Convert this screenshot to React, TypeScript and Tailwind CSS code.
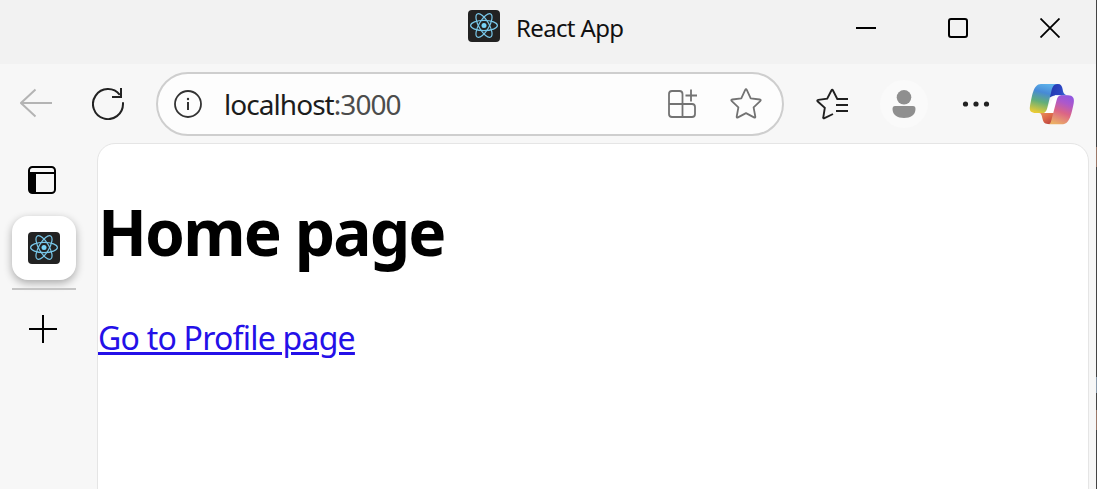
import React from "react";

function ReactIcon() {
  return (
    <svg className="block h-8 w-8 shrink-0" viewBox="0 0 32 32" fill="none">
      <rect width="32" height="32" rx="4" fill="#222" />
      <circle cx="16" cy="15.5" r="2.5" fill="#79d4f8" />
      <g stroke="#79c8ea" strokeWidth="1.2">
        <ellipse cx="16" cy="15.5" rx="13.4" ry="5.1" />
        <ellipse cx="16" cy="15.5" rx="13.4" ry="5.1" transform="rotate(60 16 15.5)" />
        <ellipse cx="16" cy="15.5" rx="13.4" ry="5.1" transform="rotate(120 16 15.5)" />
      </g>
    </svg>
  );
}

function TitleBar() {
  return (
    <header className="flex h-16 bg-[#f2f2f2] pl-[468px]">
      <div className="flex w-[352px] gap-4 pt-[10px]">
        <ReactIcon />
        <span className="text-2xl leading-[35px] tracking-[-0.65px] whitespace-nowrap text-[#111]">React App</span>
      </div>
      <div className="flex h-14 items-center">
        <button className="flex h-14 w-[92px] items-center justify-center" aria-label="Minimize">
          <svg className="h-5 w-5" viewBox="0 0 20 20"><path d="M0 10H20" stroke="#000" strokeWidth="2" /></svg>
        </button>
        <button className="flex h-14 w-[92px] items-center justify-center" aria-label="Maximize">
          <svg className="h-5 w-5" viewBox="0 0 20 20"><rect x="1" y="1" width="18" height="18" rx="2" fill="none" stroke="#000" strokeWidth="2" /></svg>
        </button>
        <button className="flex h-14 w-[92px] items-center justify-center" aria-label="Close">
          <svg className="h-5 w-5" viewBox="0 0 20 20"><path d="M.5.5l19 19M19.5.5l-19 19" stroke="#000" strokeWidth="1.8" /></svg>
        </button>
      </div>
    </header>
  );
}

function CopilotLogo() {
  return (
    <svg className="block h-11 w-12" viewBox="0 0 48 44">
      <defs>
        <linearGradient id="cpLeft" x1=".6" y1="0" x2=".35" y2="1">
          <stop offset="0" stopColor="#5cb0ea" /><stop offset=".3" stopColor="#478ad6" /><stop offset=".62" stopColor="#62ae7a" /><stop offset="1" stopColor="#e8cb35" />
        </linearGradient>
        <linearGradient id="cpRight" x1=".7" y1="0" x2=".35" y2="1">
          <stop offset="0" stopColor="#9257df" /><stop offset=".25" stopColor="#ad58cb" /><stop offset=".58" stopColor="#dc6585" /><stop offset="1" stopColor="#ebae66" />
        </linearGradient>
        <linearGradient id="cpTop" x1="0" y1=".5" x2="1" y2=".7">
          <stop offset="0" stopColor="#2439b0" /><stop offset=".6" stopColor="#2d47c4" /><stop offset="1" stopColor="#3f7ad8" />
        </linearGradient>
        <linearGradient id="cpBottom" x1="0" y1="0" x2=".8" y2="1">
          <stop offset="0" stopColor="#e9935c" /><stop offset=".5" stopColor="#dc6848" /><stop offset="1" stopColor="#b8403f" />
        </linearGradient>
      </defs>
      <path d="M22 2h8c3 0 4 2 4.6 5 .7 4 1.5 6 5.4 6.4H30c-3 0-6 .3-8 2z" fill="url(#cpTop)" />
      <path d="M11 31h16l-3 11h-4c-4 0-5-3-5.7-6-.5-3-1.3-5-3.3-5z" fill="url(#cpBottom)" />
      <path d="M27 13.3h6L26 31H14c4 0 4-2 6-6z" fill="#fff" />
      <path d="M13 2h16.5c-4.5 0-5.5 4-6.5 9l-3.5 14c-1 4-2.2 6-5.2 6H8c-5 0-7-2-6-7C4 15 5 2 13 2z" fill="url(#cpLeft)" />
      <path d="M33 13.3h7c5 0 6.7 3 5.7 8C43.8 30 42 42.2 35 42.2H20c3 0 3-3 4.2-7.2L28.4 19c1-3.5 2-5.7 4.6-5.7z" fill="url(#cpRight)" />
    </svg>
  );
}

function Toolbar() {
  return (
    <nav className="flex h-20 bg-[#f7f7f7] pt-2">
      <button className="flex h-16 w-[72px] items-center justify-center" aria-label="Back">
        <svg className="h-8 w-8" viewBox="0 0 32 32" fill="none" stroke="#b4b4b4" strokeWidth="2"><path d="M32 15H1M15.5 1.5L1 15l14.5 13.5" /></svg>
      </button>
      <button className="flex h-16 w-[72px] items-center justify-center" aria-label="Refresh">
        <svg className="h-8 w-8" viewBox="0 0 32 32" fill="none" stroke="#222" strokeWidth="2"><path d="M31 14.2V16a15 15 0 1 1-3.2-9.2M29 0v9h-9" /></svg>
      </button>
      <div className="ml-3 flex h-16 w-[628px] items-center rounded-full border-2 border-[#cecece] bg-[#fdfdfd] pl-4">
        <svg className="h-7 w-7 shrink-0" viewBox="0 0 28 28" fill="none">
          <circle cx="14" cy="14" r="13" stroke="#333" strokeWidth="1.8" />
          <path d="M14 12v8" stroke="#333" strokeWidth="2" /><circle cx="14" cy="9" r="1.2" fill="#333" />
        </svg>
        <span className="ml-[22px] w-[440px] text-[28px] leading-[60px] tracking-[-0.95px] whitespace-nowrap text-[#1c1c1c]">localhost<span className="text-[#4c4c4c]">:3000</span></span>
        <svg className="ml-1 h-8 w-8 shrink-0" viewBox="0 0 32 32" fill="none" stroke="#737373" strokeWidth="1.8">
          <path d="M4 3h7.5q3 0 3 3v23H4q-3 0-3-3V6q0-3 3-3zM1 16h23q3 0 3 3v7q0 3-3 3h-9.5M23 1.5v12M17.5 7.5h11.5" />
        </svg>
        <svg className="ml-[30px] h-8 w-8 shrink-0" viewBox="0 0 32 32" fill="none" stroke="#737373" strokeWidth="1.8" strokeLinejoin="round">
          <path d="M15.1 2.1q.9-1.8 1.8 0l3.8 8.2 9 1.2q1.8.3.5 1.6l-6.6 6.3 1.7 9.1q.3 1.8-1.3.9L16 25.1l-8 4.3q-1.6.9-1.3-.9l1.7-9.1-6.6-6.3q-1.3-1.3.5-1.6l9-1.2z" />
        </svg>
      </div>
      <button className="ml-3 flex h-16 w-[72px] items-center justify-center" aria-label="Favorites">
        <svg className="h-8 w-8" viewBox="0 0 32 32" fill="none" stroke="#202020" strokeWidth="1.9">
          <path d="M17 26l-8.5 4.2q-1.5.7-1.2-.9l1.5-9.4-7-6.4q-1.3-1.3.5-1.6l8.9-1.3 4.2-8.1q.8-1.5 1.6 0L21.3 11H32M20 17h12M20 23h12" />
        </svg>
      </button>
      <button className="flex h-16 w-[72px] items-center justify-center" aria-label="Profile">
        <span className="flex h-12 w-12 items-center justify-center rounded-full bg-[#fafafa]">
          <svg className="h-7 w-6" viewBox="0 0 24 28" fill="#8f8f8f"><circle cx="12" cy="7.3" r="7.3" /><path d="M3 16h18q2.5 0 2.5 3c0 6-5 9-11.5 9S.5 25 .5 19q0-3 2.5-3z" /></svg>
        </span>
      </button>
      <button className="flex h-16 w-[72px] items-center justify-center" aria-label="More">
        <svg className="h-6 w-8" viewBox="0 0 32 24" fill="#222"><circle cx="5.5" cy="12" r="2.6" /><circle cx="16" cy="12" r="2.6" /><circle cx="26.5" cy="12" r="2.6" /></svg>
      </button>
      <button className="ml-4 flex h-16 w-12 items-center justify-center" aria-label="Copilot"><CopilotLogo /></button>
    </nav>
  );
}

function Sidebar() {
  return (
    <aside className="flex w-[97px] shrink-0 flex-col pt-[22px] pl-3">
      <div className="flex h-7 w-[60px] justify-center">
        <svg className="h-7 w-7" viewBox="0 0 28 28" fill="none">
          <rect x="1" y="1" width="26" height="26" rx="3.5" stroke="#000" strokeWidth="2" />
          <path d="M1 7h26" stroke="#000" strokeWidth="2" /><path d="M1 7h7v20H4q-3 0-3-3z" fill="#000" />
        </svg>
      </div>
      <div className="mt-[22px] flex h-16 w-16 items-center justify-center rounded-2xl bg-white shadow-[0_3px_9px_rgba(0,0,0,0.32)]"><ReactIcon /></div>
      <div className="mt-2 h-[2px] w-16 bg-[#c5c5c5]" />
      <button className="mt-[25px] ml-[17px] h-7 w-7" aria-label="New tab">
        <svg className="block h-7 w-7" viewBox="0 0 28 28"><path d="M14 0v28M0 14h28" stroke="#000" strokeWidth="2" /></svg>
      </button>
    </aside>
  );
}

export default function App() {
  return (
    <div className="flex h-[489px] w-[1097px] overflow-hidden bg-[#f7f7f7] font-['Noto_Sans',sans-serif]">
      <div className="flex w-[1096px] shrink-0 flex-col">
        <TitleBar />
        <Toolbar />
        <div className="flex min-h-0 flex-1">
          <Sidebar />
          <main className="-mt-px h-[370px] w-[992px] shrink-0 rounded-t-[18px] border border-[#e5e5e5] bg-white">
            <h1 className="mt-[48px] text-[64px] leading-[80px] font-bold tracking-[-1.9px] whitespace-nowrap text-black">Home page</h1>
            <p className="mt-[46px] text-[32px] leading-[40px] tracking-[-0.77px] whitespace-nowrap">
              <a href="#" className="text-[#2410e8] underline decoration-[3px] underline-offset-[2px]">Go to Profile page</a>
            </p>
          </main>
        </div>
      </div>
      <div className="flex w-px flex-col bg-[#444]">
        <div className="h-[147px]" /><div className="h-5 bg-[#9a7869]" />
        <div className="mt-[210px] h-4 bg-[#8b9bab]" /><div className="mt-[17px] h-5 bg-[#9a7869]" />
      </div>
    </div>
  );
}
